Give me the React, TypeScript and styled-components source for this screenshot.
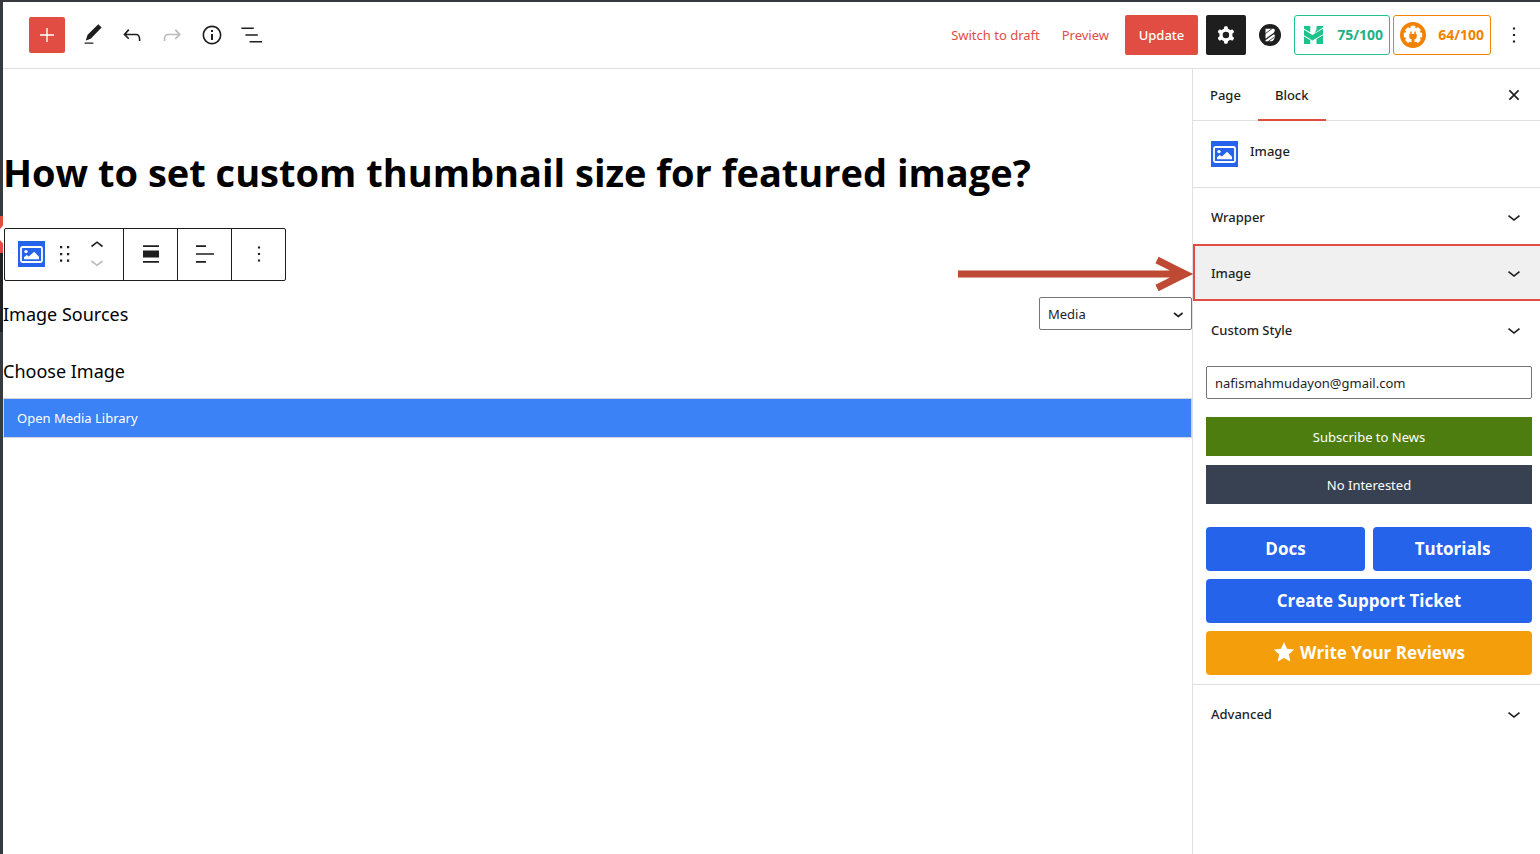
import React from 'react';
import styled, { createGlobalStyle, css } from 'styled-components';

const GlobalStyle = createGlobalStyle`
  *, *::before, *::after { box-sizing: border-box; }
  body {
    margin: 0;
    background: #fff;
    color: #1e1e1e;
    font-family: 'Noto Sans', 'Open Sans', sans-serif;
    font-size: 13px;
    line-height: 20px;
    overflow-x: hidden;
  }
  button, input, select { font: inherit; color: inherit; margin: 0; }
  button { cursor: pointer; }
  h1, h2 { margin: 0; }
`;

const displayFont = "'Open Sans', 'Noto Sans', sans-serif";

const Page = styled.div`
  display: flex;
  min-height: 100vh;
  border-top: 2px solid #36393e;
`;

const AdminMenu = styled.nav`
  display: flex;
  flex-direction: column;
  flex: none;
  width: 3px;
  padding-top: 214px;
  background: #363b3f;
`;

const CurrentMenuItem = styled.a`
  display: block;
  height: 37px;
  background: #e14d43;

  svg { display: block; }
`;

const Submenu = styled.div`
  height: 79px;
  background: #1f2326;
`;

const Editor = styled.div`
  display: flex;
  flex: 1;
  flex-direction: column;
  min-width: 0;
`;

const Header = styled.header`
  display: flex;
  justify-content: space-between;
  align-items: center;
  height: 67px;
  padding: 0 8px 0 26px;
  border-bottom: 1px solid #e0e0e0;
`;

const ToolGroup = styled.div`
  display: flex;
  align-items: center;
  gap: 4px;
`;

const ActionGroup = styled.div`
  display: flex;
  align-items: center;
`;

const IconButton = styled.button`
  display: flex;
  align-items: center;
  justify-content: center;
  width: 36px;
  height: 36px;
  padding: 0;
  border: 0;
  background: none;

  &:disabled { color: #bbb; }
`;

const InserterButton = styled(IconButton)`
  margin-right: 5px;
  border-radius: 2px;
  background: #e14d43;
  color: #fff;
`;

const SettingsButton = styled(IconButton)`
  width: 40px;
  height: 40px;
  margin-left: 8px;
  border-radius: 2px;
  background: #1e1e1e;
  color: #fff;
`;

const PluginButton = styled(IconButton)`
  width: 48px;
`;

const MoreButton = styled(IconButton)`
  margin-left: 5px;
`;

const LinkButton = styled.button`
  height: 36px;
  margin-right: 22px;
  padding: 0;
  border: 0;
  background: none;
  color: #e14d43;
  white-space: nowrap;
`;

const PreviewButton = styled(LinkButton)`
  margin-right: 16px;
`;

const UpdateButton = styled.button`
  width: 73px;
  height: 40px;
  padding: 0;
  border: 0;
  border-radius: 2px;
  background: #e14d43;
  color: #fff;
  font-weight: 500;
`;

const ScoreButton = styled.button<{ $border: string; $text: string; $width: number }>`
  display: flex;
  align-items: center;
  justify-content: space-between;
  width: ${(p) => p.$width}px;
  height: 40px;
  padding: 0 6px;
  border: 1px solid ${(p) => p.$border};
  border-radius: 3px;
  background: #fff;
  color: ${(p) => p.$text};
  font-size: 14px;
  font-weight: 700;

  & + & { margin-left: 3px; }
`;

const Body = styled.div`
  display: flex;
  flex: 1;
`;

const Canvas = styled.main`
  flex: 1;
  min-width: 0;
`;

const Title = styled.h1`
  padding-top: 75px;
  color: #000;
  font-family: ${displayFont};
  font-size: 38px;
  font-weight: 660;
  line-height: 56px;
`;

const BlockToolbar = styled.div`
  display: flex;
  width: fit-content;
  height: 53px;
  margin: 28px 0 0 1px;
  border: 1px solid #1e1e1e;
  border-radius: 2px;
`;

const ToolbarSegment = styled.div`
  display: flex;
  align-items: center;
  justify-content: center;
  min-width: 54px;
  padding-bottom: 2px;

  & + & { border-left: 1px solid #1e1e1e; }
`;

const BlockSegment = styled(ToolbarSegment)`
  gap: 14px;
  padding: 0 14px 2px 13px;
`;

const ToolButton = styled(IconButton)`
  width: auto;
  height: auto;
`;

const Movers = styled.div`
  display: flex;
  flex-direction: column;
  gap: 1px;
  width: 24px;
  align-items: center;
`;

const FieldRow = styled.div`
  display: flex;
  align-items: center;
  justify-content: space-between;
  height: 33px;
  margin-top: 16px;
`;

const fieldText = css`
  color: #000;
  font-size: 18px;
  font-weight: 400;
  line-height: 28px;
`;

const FieldLabel = styled.label`
  ${fieldText}
`;

const FieldHeading = styled.h2`
  ${fieldText}
  margin-top: 27px;
`;

const SelectBox = styled.div`
  display: grid;
  align-items: center;
  width: 153px;

  > * { grid-area: 1 / 1; }
  > svg { justify-self: end; margin-right: 4px; pointer-events: none; }
`;

const Select = styled.select`
  appearance: none;
  width: 100%;
  height: 33px;
  padding: 0 24px 0 8px;
  border: 1px solid #757575;
  border-radius: 2px;
  background: #fff;
`;

const MediaButton = styled.button`
  display: block;
  width: 100%;
  height: 40px;
  margin-top: 13px;
  padding: 0 13px;
  border: 1px solid #d1d5db;
  background: #3b82f6;
  color: #fff;
  text-align: left;
`;

const Sidebar = styled.aside`
  flex: none;
  width: 348px;
  border-left: 1px solid #e0e0e0;
`;

const Tabs = styled.div`
  display: flex;
  height: 52px;
  padding-right: 8px;
  align-items: stretch;
  border-bottom: 1px solid #e0e0e0;
`;

const Tab = styled.button<{ $active?: boolean }>`
  height: 52px;
  padding: 0 17px;
  border: 0;
  background: none;
  box-shadow: ${(p) => (p.$active ? 'inset 0 -2px #e14d43' : 'none')};
  font-weight: 500;
`;

const CloseButton = styled(IconButton)`
  align-self: center;
  margin-left: auto;
`;

const BlockCard = styled.div`
  display: flex;
  gap: 12px;
  height: 67px;
  padding: 20px 18px;
  border-bottom: 1px solid #e0e0e0;
  font-weight: 500;

  svg { flex: none; }
`;

const Panel = styled.section<{ $marked?: boolean }>`
  position: relative;
  margin-top: ${(p) => (p.$marked ? -1 : 0)}px;
`;

const PanelToggle = styled.button<{ $marked?: boolean }>`
  display: flex;
  align-items: center;
  justify-content: space-between;
  width: 100%;
  height: 57px;
  padding: 0 14px 0 ${(p) => (p.$marked ? 16 : 18)}px;
  border: ${(p) => (p.$marked ? '2px solid #e14d43' : '0')};
  border-right: 0;
  background: ${(p) => (p.$marked ? '#f0f0f0' : 'none')};
  font-weight: 500;
`;

const Pointer = styled.svg`
  position: absolute;
  right: 100%;
  top: 12px;
`;

const PanelBody = styled.div`
  display: flex;
  flex-direction: column;
  gap: 9px;
  padding: 8px 8px 9px 13px;
  border-bottom: 1px solid #e0e0e0;
`;

const EmailInput = styled.input`
  width: 100%;
  height: 33px;
  margin-bottom: 9px;
  padding: 0 8px;
  border: 1px solid #757575;
  border-radius: 2px;
`;

const FlatButton = styled.button<{ $color: string }>`
  height: 39px;
  padding: 0;
  border: 0;
  background: ${(p) => p.$color};
  color: #fff;
`;

const LinkGrid = styled.div`
  display: grid;
  grid-template-columns: 1fr 1fr;
  gap: 8px;
  margin-top: 14px;
`;

const CtaLink = styled.a<{ $color: string; $wide?: boolean }>`
  display: flex;
  align-items: center;
  justify-content: center;
  gap: 5px;
  height: 44px;
  grid-column: ${(p) => (p.$wide ? '1 / -1' : 'auto')};
  border-radius: 4px;
  background: ${(p) => p.$color};
  color: #fff;
  font-family: ${displayFont};
  font-size: 17px;
  font-weight: 700;
  text-decoration: none;
`;

const Glyph = ({ d, size = 24 }: { d: string; size?: number }) => (
  <svg width={size} height={size} viewBox="0 0 24 24" fill="currentColor" aria-hidden="true">
    <path fillRule="evenodd" d={d} />
  </svg>
);

const icons = {
  plus: 'M11.3 12.7V19h1.4v-6.3H19v-1.4h-6.3V5h-1.4v6.3H5v1.4z',
  pencil: 'M21.600 4.500 18.300 1.200 7.600 11.800 5.800 17.600 7.600 17 11 15.600zM13.400 19.500H4.600v1.300h8.800z',
  undo: 'M18.3 11.7c-.6-.6-1.4-.9-2.3-.9H6.7l2.9-3.3-1.1-1-4.5 5L8.5 16l1-1-2.7-2.7H16c.5 0 .9.2 1.3.5 1 1 1 3.4 1 4.5v.3h1.5v-.2c0-1.5 0-4.3-1.5-5.7z',
  redo: 'M15.6 6.5l-1.1 1 2.9 3.3H8c-.9 0-1.7.3-2.3.9-1.4 1.5-1.4 4.2-1.4 5.6v.2h1.5v-.3c0-1.1 0-3.5 1-4.5.3-.3.7-.5 1.3-.5h9.2L14.5 15l1.1 1.1 4.6-4.6-4.6-5z',
  info: 'M12 2.600c-5.200 0-9.400 4.200-9.400 9.400s4.200 9.400 9.400 9.400 9.400-4.200 9.400-9.400-4.200-9.400-9.400-9.400zm0 17.200c-4.300 0-7.800-3.500-7.800-7.800S7.700 4.200 12 4.200s7.800 3.500 7.800 7.800-3.500 7.800-7.800 7.800zM11 17h2v-6h-2v6zm0-8h2V7h-2v2z',
  outline: 'M1.4 4.6h12.4V6H1.4zM5.4 11.3h12.4v1.4H5.4zM9.6 18h12.4v1.4H9.6z',
  cog: 'M10.289 4.836A1 1 0 0111.275 4h1.306a1 1 0 01.987.836l.244 1.466c.787.26 1.503.679 2.108 1.218l1.393-.522a1 1 0 011.216.437l.653 1.13a1 1 0 01-.23 1.273l-1.148.944a6.025 6.025 0 010 2.435l1.149.946a1 1 0 01.23 1.272l-.653 1.13a1 1 0 01-1.216.437l-1.394-.522c-.605.54-1.32.958-2.108 1.218l-.244 1.466a1 1 0 01-.987.836h-1.306a1 1 0 01-.986-.836l-.244-1.466a5.995 5.995 0 01-2.108-1.218l-1.394.522a1 1 0 01-1.217-.436l-.653-1.131a1 1 0 01.23-1.272l1.149-.946a6.026 6.026 0 010-2.435l-1.148-.944a1 1 0 01-.23-1.272l.653-1.131a1 1 0 011.217-.437l1.393.522a5.994 5.994 0 012.108-1.218l.244-1.466zM14.929 12a3 3 0 11-6 0 3 3 0 016 0z',
  more: 'M13 19h-2v-2h2v2zm0-6h-2v-2h2v2zm0-6h-2V5h2v2z',
  close: 'M12 13.06l3.712 3.713 1.061-1.06L13.061 12l3.712-3.712-1.06-1.06L12 10.938 8.288 7.227l-1.061 1.06L10.939 12l-3.712 3.712 1.06 1.061L12 13.061z',
  down: 'M18 11.300L12 16.100l-6-4.800 1-1.300 5 4 5-4 1 1.300z',
  star: 'M12 0l3.300 7.300 7.700.9-5.700 5.300 1.600 7.800-6.900-3.900-6.900 3.900 1.600-7.800L1 8.200l7.700-.9z',
};

const ImageBlockIcon = () => (
  <svg width="27" height="26" viewBox="0 0 27 26" aria-hidden="true">
    <rect width="27" height="26" fill="#2563eb" />
    <rect x="3" y="6" width="21" height="15" rx="1.5" fill="none" stroke="#fff" strokeWidth="1.8" />
    <circle cx="8" cy="10.6" r="1.7" fill="#fff" />
    <path d="M6 18.3v-2l2.7-2.3 2.2 1.5 5.2-4.8 4.9 5v2.6z" fill="#fff" />
  </svg>
);

const Chevron = ({ up, muted }: { up?: boolean; muted?: boolean }) => (
  <svg width="14" height="16" viewBox="0 0 14 16" fill="none" stroke={muted ? '#bbb' : '#1e1e1e'} strokeWidth="1.6" aria-hidden="true">
    <path d={up ? 'M1.5 9.5 7 5.2l5.5 4.3' : 'M1.5 7 7 11.3 12.5 7'} />
  </svg>
);

const DragIcon = () => (
  <svg width="12" height="18" viewBox="0 0 12 18" fill="currentColor" aria-hidden="true">
    <path d="M1 1h2.2v2.2H1zM8 1h2.2v2.2H8zM1 8h2.2v2.2H1zM8 8h2.2v2.2H8zM1 14.5h2.2v2.2H1zM8 14.5h2.2v2.2H8z" />
  </svg>
);

const AlignIcon = () => (
  <svg width="18" height="20" viewBox="0 0 18 20" fill="currentColor" aria-hidden="true">
    <path d="M1 1.2h16v1.7H1zM1 6.5h16v7H1zM1 17h16v1.7H1z" />
  </svg>
);

const TextAlignIcon = () => (
  <svg width="18" height="20" viewBox="0 0 18 20" fill="currentColor" aria-hidden="true">
    <path d="M0 1.2h10v1.7H0zM0 9.2h18v1.6H0zM0 17h10v1.7H0z" />
  </svg>
);

const BIcon = () => (
  <svg width="22" height="22" viewBox="0 0 22 22" aria-hidden="true">
    <circle cx="11" cy="11" r="11" fill="#1e1e1e" />
    <path d="M6.500 4.800h7.600c1.500 0 2.200 1.300 1.500 2.500l-.8 1.400-8.300 6.100z M6.500 16.200l8.300-6c1.400.7 1.700 2.100 1 3.400l-1 1.800c-.6 1.200-1.600 1.900-3 1.900H6.500z" fill="#fff" />
    <path d="M6 9.800 13 4.700M9 17.600l7.600-5.500" stroke="#1e1e1e" strokeWidth="0.800" />
  </svg>
);

const SeoIcon = () => (
  <svg width="24" height="20" viewBox="0 0 24 20" aria-hidden="true">
    <path
      fill="#1fc28b"
      d="M3 1h6.300v6.300L3 3.700zM15.500 1H22v1.600l-8.600 5.700 2.100-3.700zM3 4.800l8.400 5.300L22 3.800v5.400L11.400 15.400 3 10.200zM3 11.500l6.300 3.800V19H3zM15.500 14 22 10.200V19h-6.500z"
    />
  </svg>
);

const PlugIcon = () => (
  <svg width="26" height="26" viewBox="0 0 26 26" aria-hidden="true">
    <circle cx="13" cy="13" r="13" fill="#f18200" />
    <g fill="#fff">
      <circle cx="13" cy="13" r="7.6" />
      {[0, 45, 90, 135, 225, 270, 315].map((a) => (
        <rect key={a} x="10.6" y="3.8" width="4.800" height="4" rx="1" transform={`rotate(${a} 13 13)`} />
      ))}
    </g>
    <path d="M10.200 9.500h1.500v2.600h2.600V9.500h1.500v2.600h.9v2.700c0 1.300-.9 2.200-2.200 2.500V23h-3v-5.700c-1.300-.3-2.200-1.200-2.200-2.500v-2.700h.9z" fill="#f18200" />
  </svg>
);

export default function App() {
  return (
    <>
      <GlobalStyle />
      <Page>
        <AdminMenu aria-label="Admin menu">
          <CurrentMenuItem href="#pages" aria-label="Pages">
            <svg width="3" height="37" viewBox="0 0 3 37" aria-hidden="true">
              <path d="M3 9.5 0 13v11l3 3.5z" fill="#fff" />
            </svg>
          </CurrentMenuItem>
          <Submenu />
        </AdminMenu>
        <Editor>
          <Header>
            <ToolGroup>
              <InserterButton aria-label="Add block"><Glyph d={icons.plus} /></InserterButton>
              <IconButton aria-label="Tools"><Glyph d={icons.pencil} /></IconButton>
              <IconButton aria-label="Undo"><Glyph d={icons.undo} size={26} /></IconButton>
              <IconButton aria-label="Redo" disabled><Glyph d={icons.redo} size={26} /></IconButton>
              <IconButton aria-label="Details"><Glyph d={icons.info} /></IconButton>
              <IconButton aria-label="List view"><Glyph d={icons.outline} /></IconButton>
            </ToolGroup>
            <ActionGroup>
              <LinkButton>Switch to draft</LinkButton>
              <PreviewButton>Preview</PreviewButton>
              <UpdateButton>Update</UpdateButton>
              <SettingsButton aria-label="Settings"><Glyph d={icons.cog} size={26} /></SettingsButton>
              <PluginButton aria-label="Blocks plugin"><BIcon /></PluginButton>
              <ScoreButton $border="#1fc28b" $text="#1fb184" $width={96}><SeoIcon />75/100</ScoreButton>
              <ScoreButton $border="#f18200" $text="#f18200" $width={98}><PlugIcon />64/100</ScoreButton>
              <MoreButton aria-label="Options"><Glyph d={icons.more} size={26} /></MoreButton>
            </ActionGroup>
          </Header>
          <Body>
            <Canvas>
              <Title>How to set custom thumbnail size for featured image?</Title>
              <BlockToolbar role="toolbar" aria-label="Block tools">
                <BlockSegment>
                  <ToolButton aria-label="Image block"><ImageBlockIcon /></ToolButton>
                  <ToolButton aria-label="Drag"><DragIcon /></ToolButton>
                  <Movers>
                    <ToolButton aria-label="Move up"><Chevron up /></ToolButton>
                    <ToolButton aria-label="Move down" disabled><Chevron muted /></ToolButton>
                  </Movers>
                </BlockSegment>
                <ToolbarSegment><ToolButton aria-label="Align"><AlignIcon /></ToolButton></ToolbarSegment>
                <ToolbarSegment><ToolButton aria-label="Align text"><TextAlignIcon /></ToolButton></ToolbarSegment>
                <ToolbarSegment><ToolButton aria-label="More"><Glyph d={icons.more} size={26} /></ToolButton></ToolbarSegment>
              </BlockToolbar>
              <FieldRow>
                <FieldLabel htmlFor="source">Image Sources</FieldLabel>
                <SelectBox>
                  <Select id="source" defaultValue="Media"><option>Media</option></Select>
                  <svg width="20" height="20" viewBox="0 0 20 20" fill="none" stroke="#1e1e1e" strokeWidth="1.6" aria-hidden="true">
                    <path d="M6 9l4.300 3.400L14.600 9" />
                  </svg>
                </SelectBox>
              </FieldRow>
              <FieldHeading>Choose Image</FieldHeading>
              <MediaButton>Open Media Library</MediaButton>
            </Canvas>
            <Sidebar>
              <Tabs>
                <Tab>Page</Tab>
                <Tab $active>Block</Tab>
                <CloseButton aria-label="Close settings"><Glyph d={icons.close} size={26} /></CloseButton>
              </Tabs>
              <BlockCard><ImageBlockIcon />Image</BlockCard>
              <Panel><PanelToggle>Wrapper<Glyph d={icons.down} /></PanelToggle></Panel>
              <Panel $marked>
                <PanelToggle $marked>Image<Glyph d={icons.down} /></PanelToggle>
                <Pointer width="236" height="36" viewBox="0 0 236 36" fill="none" stroke="#bf4a33" strokeWidth="7" aria-hidden="true">
                  <path d="M1 18h226M200 4l28 14-28 14" />
                  <path d="M224 12.500 236 18l-12 5.500z" fill="#bf4a33" stroke="none" />
                </Pointer>
              </Panel>
              <Panel>
                <PanelToggle>Custom Style<Glyph d={icons.down} /></PanelToggle>
                <PanelBody>
                  <EmailInput type="email" aria-label="Email" defaultValue="nafismahmudayon@gmail.com" />
                  <FlatButton $color="#4d7c0f">Subscribe to News</FlatButton>
                  <FlatButton $color="#374151">No Interested</FlatButton>
                  <LinkGrid>
                    <CtaLink href="#docs" $color="#2563eb">Docs</CtaLink>
                    <CtaLink href="#tutorials" $color="#2563eb">Tutorials</CtaLink>
                    <CtaLink href="#support" $color="#2563eb" $wide>Create Support Ticket</CtaLink>
                    <CtaLink href="#reviews" $color="#f59e0b" $wide><Glyph d={icons.star} size={22} />Write Your Reviews</CtaLink>
                  </LinkGrid>
                </PanelBody>
              </Panel>
              <Panel><PanelToggle>Advanced<Glyph d={icons.down} /></PanelToggle></Panel>
            </Sidebar>
          </Body>
        </Editor>
      </Page>
    </>
  );
}
